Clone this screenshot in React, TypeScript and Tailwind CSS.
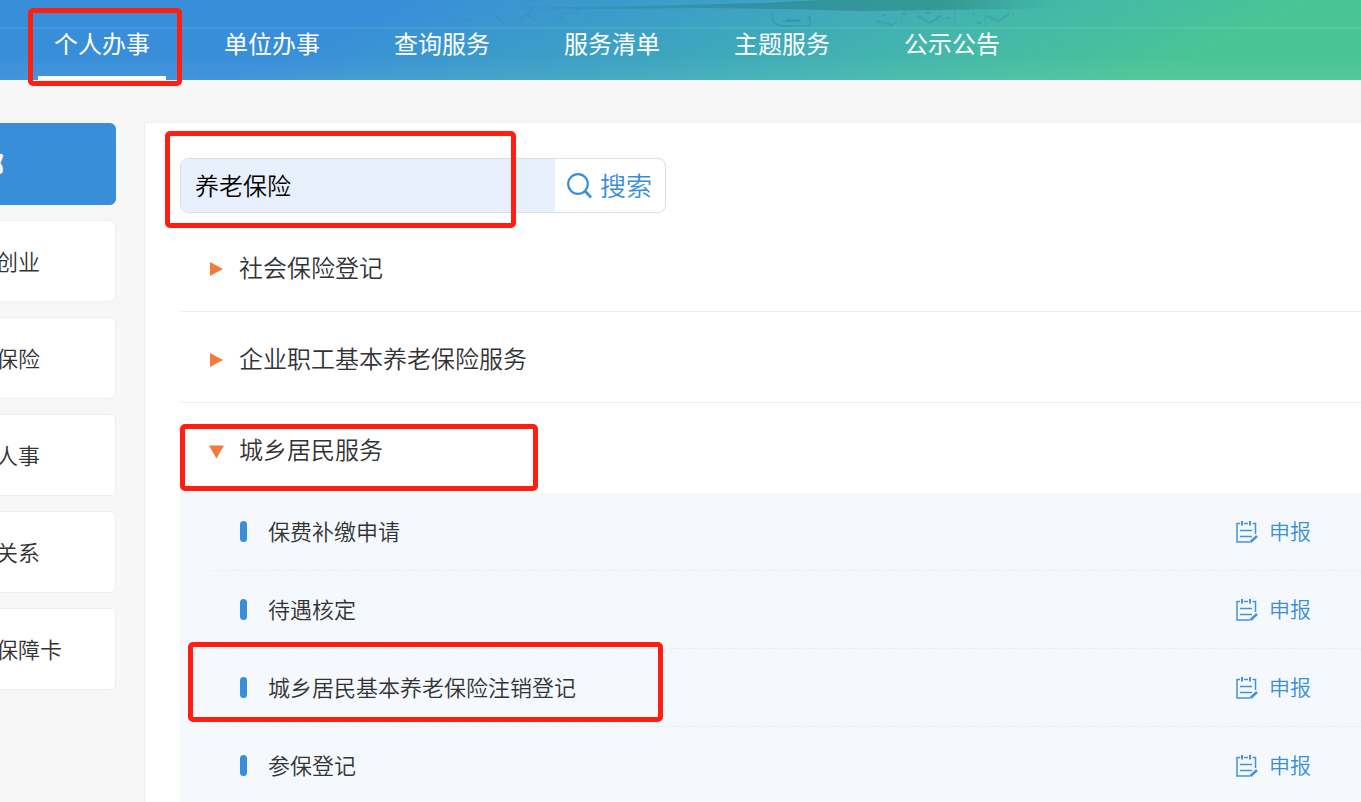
import { useState } from 'react';

const navItems = ['个人办事', '单位办事', '查询服务', '服务清单', '主题服务', '公示公告'];

const categories = ['全部', '就业创业', '社会保险', '人才人事', '劳动关系', '社会保障卡'];

const services = ['保费补缴申请', '待遇核定', '城乡居民基本养老保险注销登记', '参保登记'];

const groups = [
  { title: '社会保险登记', open: false },
  { title: '企业职工基本养老保险服务', open: false },
  { title: '城乡居民服务', open: true },
];

function Highlight({ className }: { className: string }) {
  return (
    <span
      aria-hidden="true"
      className={`pointer-events-none absolute z-10 rounded-[5px] border-[5px] border-[#ff1e10] ${className}`}
    />
  );
}

function HeaderArt() {
  return (
    <svg
      className="absolute left-0 top-0"
      width="1361"
      height="80"
      viewBox="0 0 1361 80"
      aria-hidden="true"
    >
      <defs>
        <linearGradient id="roof" x1="0" x2="1">
          <stop offset="0" stopColor="#2c7f96" stopOpacity="0.1" />
          <stop offset="0.45" stopColor="#2c8390" stopOpacity="0.6" />
          <stop offset="0.8" stopColor="#2f9088" stopOpacity="0.7" />
          <stop offset="1" stopColor="#3aa890" stopOpacity="0" />
        </linearGradient>
        <linearGradient id="haze" x1="0" x2="0" y1="0" y2="1">
          <stop offset="0" stopColor="#fff" stopOpacity="0" />
          <stop offset="1" stopColor="#fff" stopOpacity="0.06" />
        </linearGradient>
      </defs>
      <path d="M480 8 L640 6 L760 3 L820 0 H1070 L1050 7 L1020 9 L940 10 L860 11 L780 9 L700 8 L600 9 Z" fill="url(#roof)" />
      <g stroke="#2a7d98" strokeOpacity="0.25" fill="none">
        <path d="M492 14l10 6M500 26l10-8M520 20l14-12M526 14l10 6M552 26l18-16M560 18l6 5M574 14l8-8" strokeOpacity="0.3" />
        <path d="M446 22l10-6M462 18l8 3M520 5l14-5M572 4l10-4M504 35l8-7M536 33l10-8M588 21l3 1" strokeOpacity="0.2" />
        <path d="M773 13q-3 12 10 13h24q6-2 1-9M808 17h3M782 21h19" strokeWidth="2" />
        <path d="M786 20h14" strokeWidth="3" />
        <path d="M902 11v16M918 12v8M938 14v8M955 10v18M985 10v18M1013 12v6" strokeOpacity="0.15" />
        <path d="M876 21l16 4 5-3M918 16l12 7 12-8M987 16l12 5 10-7" strokeWidth="2" />
        <path d="M882 15h4M902 14h4M926 13h4M946 18h4M977 23h4M972 14h3" strokeWidth="2" />
      </g>
      <rect y="27" width="1361" height="2" fill="#fff" fillOpacity="0.08" />
      <rect y="55" width="1361" height="25" fill="url(#haze)" />
    </svg>
  );
}

function FormIcon() {
  return (
    <svg width="22" height="22" viewBox="0 0 22 22" fill="none" stroke="#4293db" aria-hidden="true">
      <path d="M4 2.5H1V21H14" strokeWidth="1.5" />
      <path d="M8 2.5h4M16.5 2.5H19.500V13" strokeWidth="1.5" />
      <path d="M6 0v4.5M14 0v4.5" strokeWidth="2" />
      <path d="M4 9.5h12M4 15.5h12" strokeWidth="1.5" />
      <path d="M14.5 21l6.5-6" strokeWidth="2.5" />
    </svg>
  );
}

export default function App() {
  const [keyword, setKeyword] = useState('养老保险');

  return (
    <div className="h-screen overflow-hidden bg-[#f7f7f7] font-['Noto_Sans_CJK_SC',sans-serif] text-[#333]">
      <header className="relative h-20 bg-[linear-gradient(155deg,#398ed9_26%,#3ca3c2_49%,#43b7ab_68%,#49c595_86%)]">
        <HeaderArt />
        <nav className="relative flex h-full gap-[42px] pl-[38px]">
          {navItems.map((item, i) => (
            <a
              key={item}
              href="#"
              className={`relative flex h-full shrink-0 items-center border-b-4 px-4 pt-[10px] text-2xl text-white ${
                i === 0 ? 'border-white' : 'border-transparent'
              }`}
            >
              {item}
              {i === 0 && <Highlight className="-left-[10px] -right-4 top-2 -bottom-[10px]" />}
            </a>
          ))}
        </nav>
      </header>

      <div className="flex pt-[42px]">
        <aside className="-ml-[84px] mr-7 flex w-[200px] shrink-0 flex-col gap-[15px] pt-px">
          {categories.map((item, i) => (
            <a
              key={item}
              href="#"
              className={`flex h-[82px] items-center rounded-md border pb-[2px] pl-[35px] ${
                i === 0
                  ? 'border-[#398ed9] bg-[#398ed9] text-[26px] font-bold text-white'
                  : 'border-[#eee] bg-white text-[22px] font-[350]'
              }`}
            >
              {item}
            </a>
          ))}
        </aside>

        <main className="min-h-screen grow border-l border-t border-[#eee] bg-white pl-[35px] pt-[35px]">
          <form className="relative flex h-[55px] w-[486px] rounded-lg border border-[#ddd]" onSubmit={(e) => e.preventDefault()}>
            <input
              type="text"
              aria-label="关键字"
              value={keyword}
              onChange={(e) => setKeyword(e.target.value)}
              className="min-w-0 grow rounded-l-lg bg-[#e8f0fe] px-[14px] pb-[2px] text-2xl font-[350] text-black outline-none"
            />
            <button type="submit" className="flex w-[110px] items-center gap-2 pl-3 text-[26px] font-[350] text-[#398ed9]">
              <svg width="25" height="26" viewBox="0 0 25 26" fill="none" stroke="#398ed9" strokeWidth="2.2" aria-hidden="true">
                <circle cx="11" cy="11" r="9.8" />
                <path d="M18 18l6 6.5" strokeWidth="2.6" />
              </svg>
              <span className="pb-[2px]">搜索</span>
            </button>
            <Highlight className="-left-4 -top-7 h-[97px] w-[351px]" />
          </form>

          <ul className="pt-2">
            {groups.map((group) => (
              <li key={group.title}>
                <button
                  type="button"
                  aria-expanded={group.open}
                  className={`relative flex w-full items-center pl-[29px] pt-[3px] text-2xl font-[350] ${
                    group.open ? 'h-[90px]' : 'h-[91px] border-b border-[#eee]'
                  }`}
                >
                  <svg width="16" height="20" viewBox="0 0 16 20" fill="#f07b3a" className="mr-[14px]" aria-hidden="true">
                    {group.open ? <path d="M0 5.500h15L7.500 18.500z" /> : <path d="M1 4v14l13-7z" />}
                  </svg>
                  <span className="pb-[2px]">{group.title}</span>
                  {group.open && <Highlight className="left-0 top-[21px] h-[67px] w-[358px]" />}
                </button>

                {group.open && (
                  <ul className="bg-[#f5f9fe] pl-8">
                    {services.map((name) => (
                      <li
                        key={name}
                        className="relative flex h-[78px] items-center border-b border-dashed border-[#e9eef2] pl-7 pr-[50px]"
                      >
                        <span className="mr-[21px] h-[21px] w-[7px] rounded-full bg-[#398ed9]" />
                        <span className="grow pb-[2px] text-[22px] font-[350]">{name}</span>
                        <a href="#" className="flex items-center gap-[11px] text-[21px] font-[350] text-[#398ed9]">
                          <FormIcon />
                          <span className="pb-[2px]">申报</span>
                        </a>
                        {name === '城乡居民基本养老保险注销登记' && (
                          <Highlight className="-left-6 -top-[7px] h-20 w-[475px]" />
                        )}
                      </li>
                    ))}
                  </ul>
                )}
              </li>
            ))}
          </ul>
        </main>
      </div>
    </div>
  );
}
